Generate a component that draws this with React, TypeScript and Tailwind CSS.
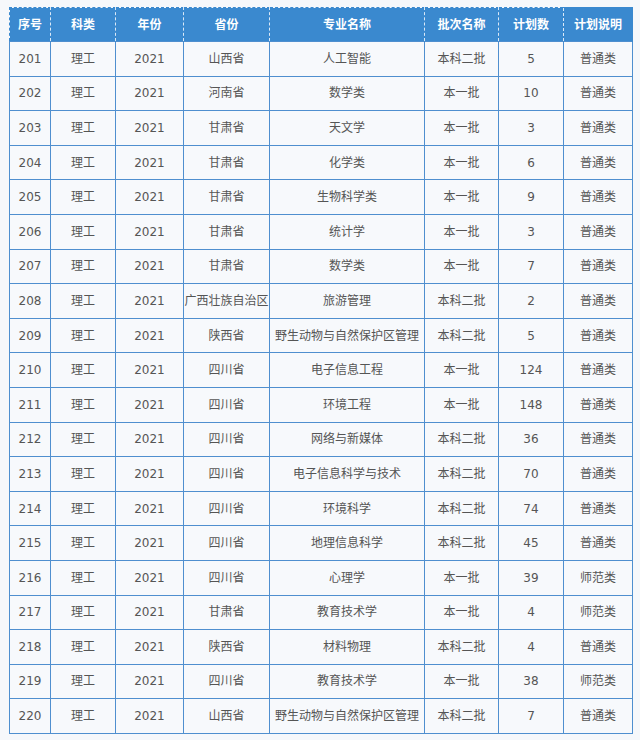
import React from "react";

const rows: [number, string, string, string, string, string, number, string][] = [
  [201, "理工", "2021", "山西省", "人工智能", "本科二批", 5, "普通类"],
  [202, "理工", "2021", "河南省", "数学类", "本一批", 10, "普通类"],
  [203, "理工", "2021", "甘肃省", "天文学", "本一批", 3, "普通类"],
  [204, "理工", "2021", "甘肃省", "化学类", "本一批", 6, "普通类"],
  [205, "理工", "2021", "甘肃省", "生物科学类", "本一批", 9, "普通类"],
  [206, "理工", "2021", "甘肃省", "统计学", "本一批", 3, "普通类"],
  [207, "理工", "2021", "甘肃省", "数学类", "本一批", 7, "普通类"],
  [208, "理工", "2021", "广西壮族自治区", "旅游管理", "本科二批", 2, "普通类"],
  [209, "理工", "2021", "陕西省", "野生动物与自然保护区管理", "本科二批", 5, "普通类"],
  [210, "理工", "2021", "四川省", "电子信息工程", "本一批", 124, "普通类"],
  [211, "理工", "2021", "四川省", "环境工程", "本一批", 148, "普通类"],
  [212, "理工", "2021", "四川省", "网络与新媒体", "本科二批", 36, "普通类"],
  [213, "理工", "2021", "四川省", "电子信息科学与技术", "本科二批", 70, "普通类"],
  [214, "理工", "2021", "四川省", "环境科学", "本科二批", 74, "普通类"],
  [215, "理工", "2021", "四川省", "地理信息科学", "本科二批", 45, "普通类"],
  [216, "理工", "2021", "四川省", "心理学", "本一批", 39, "师范类"],
  [217, "理工", "2021", "甘肃省", "教育技术学", "本一批", 4, "师范类"],
  [218, "理工", "2021", "陕西省", "材料物理", "本科二批", 4, "普通类"],
  [219, "理工", "2021", "四川省", "教育技术学", "本一批", 38, "师范类"],
  [220, "理工", "2021", "山西省", "野生动物与自然保护区管理", "本科二批", 7, "普通类"],
];

const headers = ["序号", "科类", "年份", "省份", "专业名称", "批次名称", "计划数", "计划说明"];
const widths = ["w-[41px]", "w-[65px]", "w-[68px]", "w-[86px]", "w-[155px]", "w-[74px]", "w-[65px]", "w-[69px]"];

export default function App() {
  return (
    <div className="w-[640px] h-[740px] bg-[#f6f8fb] pt-[7px] pl-[9px] font-['DejaVu_Sans','Noto_Sans_CJK_SC',sans-serif]">
      <table className="border-collapse table-fixed w-[623px] text-[12px] text-[#555]">
        <colgroup>
          {widths.map((w, i) => (
            <col key={i} className={w} />
          ))}
        </colgroup>
        <thead>
          <tr className="h-[34px] bg-[#3a89cf]">
            {headers.map((h, i) => (
              <th
                key={h}
                className={`p-0 text-center font-bold text-white border-t border-[#3a89cf] ${
                  i === 0 ? "border-l" : ""
                } ${i === headers.length - 1 ? "border-r border-r-[#3a89cf]" : "border-r border-dashed border-r-[#dbe9f7]"}`}
              >
                {h}
              </th>
            ))}
          </tr>
        </thead>
        <tbody>
          {rows.map((r) => (
            <tr key={r[0]} className="h-[34.6px] bg-[#f7f9fc]">
              {r.map((c, i) => (
                <td
                  key={i}
                  className="p-0 text-center whitespace-nowrap border border-[#4f8fcf]"
                >
                  {c}
                </td>
              ))}
            </tr>
          ))}
        </tbody>
      </table>
    </div>
  );
}
